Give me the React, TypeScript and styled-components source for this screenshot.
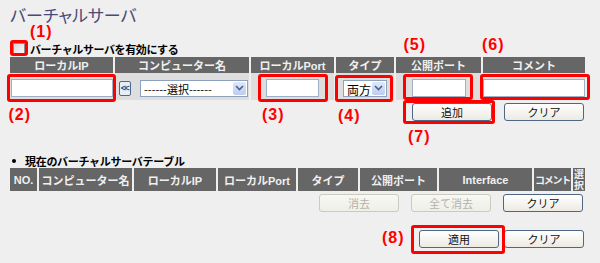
import React from "react";
import styled, { createGlobalStyle } from "styled-components";

const GlobalStyle = createGlobalStyle`
  body {
    margin: 0;
    background: #efefef;
    font-family: "Liberation Sans", "Noto Sans CJK JP", sans-serif;
  }
  #root {
    width: 600px;
    height: 263px;
    overflow: hidden;
  }
`;

const TOP_COLS = "103px 134px 83px 58px 85px 102px";
const LIST_COLS = "27px 93px 82px 78px 60px 77px 93px 37px 12px";

export default function App() {
  return (
    <>
      <GlobalStyle />
      <Page>
        <Title>バーチャルサーバ</Title>

        <CheckRow>
          <Callout n={1} ring={[-3, -3, -1, -3]} tag={[-19, 17]}>
            <CheckBox />
          </Callout>
          <CheckLabel>バーチャルサーバを有効にする</CheckLabel>
        </CheckRow>

        <Grid $cols={TOP_COLS}>
          <HeadCell $h={16}>ローカルIP</HeadCell>
          <HeadCell $h={16}>コンピューター名</HeadCell>
          <HeadCell $h={16}>ローカルPort</HeadCell>
          <HeadCell $h={16}>タイプ</HeadCell>
          <HeadCell $h={16}>公開ポート</HeadCell>
          <HeadCell $h={16}>コメント</HeadCell>

          <InputCell>
            <Callout n={2} ring={[-5, -3, -5, -4]} tag={[28, -2]}>
              <TextInput $w={102} />
            </Callout>
          </InputCell>
          <InputCell $start>
            <PickButton>&lt;&lt;</PickButton>
            <SelectBox $w={108}>
              <Select defaultValue="none">
                <option value="none">------選択------</option>
              </Select>
              <Arrow>
                <svg width="9" height="6" viewBox="0 0 9 6">
                  <path d="M1 1 L4.5 4.5 L8 1" fill="none" stroke="#4d6185" strokeWidth="1.6" />
                </svg>
              </Arrow>
            </SelectBox>
          </InputCell>
          <InputCell>
            <Callout n={3} ring={[-5, -9, -5, -8]} tag={[28, -4]}>
              <TextInput $w={53} />
            </Callout>
          </InputCell>
          <InputCell>
            <Callout n={4} ring={[-5, -6, -5, -8]} tag={[28, -5]}>
              <SelectBox $w={44}>
                <Select defaultValue="both" $big>
                  <option value="both">両方</option>
                </Select>
                <Arrow>
                  <svg width="9" height="6" viewBox="0 0 9 6">
                    <path d="M1 1 L4.5 4.5 L8 1" fill="none" stroke="#4d6185" strokeWidth="1.6" />
                  </svg>
                </Arrow>
              </SelectBox>
            </Callout>
          </InputCell>
          <InputCell>
            <Callout n={5} ring={[-5, -7, -3, -9]} tag={[-42, -8]}>
              <TextInput $w={54} />
            </Callout>
          </InputCell>
          <InputCell>
            <Callout n={6} ring={[-5, -5, -3, -3]} tag={[-42, -1]}>
              <TextInput $w={102} />
            </Callout>
          </InputCell>
        </Grid>

        <ButtonRow $right={1} $top={3}>
          <Callout n={7} ring={[-3, -3, -3, -9]} tag={[26, -4]}>
            <Button>追加</Button>
          </Callout>
          <Button>クリア</Button>
        </ButtonRow>

        <ListTitle>
          <Bullet />
          現在のバーチャルサーバテーブル
        </ListTitle>

        <Grid $cols={LIST_COLS}>
          <HeadCell $h={23}>NO.</HeadCell>
          <HeadCell $h={23}>コンピューター名</HeadCell>
          <HeadCell $h={23}>ローカルIP</HeadCell>
          <HeadCell $h={23}>ローカルPort</HeadCell>
          <HeadCell $h={23}>タイプ</HeadCell>
          <HeadCell $h={23}>公開ポート</HeadCell>
          <HeadCell $h={23}>Interface</HeadCell>
          <HeadCell $h={23} $tight>
            コメント
          </HeadCell>
          <NarrowHead $h={23}>
            選<br />択
          </NarrowHead>
        </Grid>

        <ButtonRow $right={2} $top={3}>
          <Button disabled>消去</Button>
          <Button disabled>全て消去</Button>
          <Button>クリア</Button>
        </ButtonRow>

        <ButtonRow $right={1} $top={18} $gap={5}>
          <Callout n={8} ring={[-5, -6, -6, -8]} tag={[0, -37]}>
            <Button>適用</Button>
          </Callout>
          <Button>クリア</Button>
        </ButtonRow>
      </Page>
    </>
  );
}

function Callout(props: {
  n: number;
  ring: [number, number, number, number];
  tag: [number, number];
  children: React.ReactNode;
}) {
  const [t, r, b, l] = props.ring;
  return (
    <Anchor>
      {props.children}
      <Ring $t={t} $r={r} $b={b} $l={l} />
      <Tag $t={props.tag[0]} $l={props.tag[1]}>
        ({props.n})
      </Tag>
    </Anchor>
  );
}

const Page = styled.div`
  padding: 5px 0 0 10px;
  width: 575px;
`;

const Title = styled.h1`
  margin: 0;
  height: 19px;
  font-family: "Noto Sans CJK JP", sans-serif;
  font-feature-settings: "palt";
  font-size: 17px;
  font-weight: 400;
  line-height: 19px;
  color: #4a4a78;
`;

const CheckRow = styled.div`
  display: flex;
  align-items: center;
  height: 16px;
  margin-top: 17px;
  padding-left: 3px;
  gap: 5px;
`;

const CheckBox = styled.span`
  display: block;
  width: 10px;
  height: 10px;
  border: 1px solid #8a8f96;
  background: linear-gradient(135deg, #d8d8d8, #fafafa);
`;

const CheckLabel = styled.span`
  font-family: "Noto Sans CJK JP", sans-serif;
  font-size: 11px;
  font-weight: 700;
  letter-spacing: -0.4px;
  color: #000;
`;

const Grid = styled.div<{ $cols: string }>`
  display: grid;
  grid-template-columns: ${(p) => p.$cols};
  column-gap: 2px;
`;

const HeadCell = styled.div<{ $h: number; $tight?: boolean }>`
  display: flex;
  align-items: center;
  justify-content: center;
  height: ${(p) => p.$h}px;
  background: #666666;
  color: #f0f0f0;
  font-size: ${(p) => (p.$tight ? "10px" : "11px")};
  font-weight: 700;
  letter-spacing: ${(p) => (p.$tight ? "-1.2px" : "0")};
  white-space: nowrap;
  overflow: hidden;
`;

const NarrowHead = styled(HeadCell)`
  flex-direction: column;
  font-size: 10px;
  line-height: 11px;
  overflow: visible;
`;

const InputCell = styled.div<{ $start?: boolean }>`
  display: flex;
  align-items: center;
  justify-content: ${(p) => (p.$start ? "flex-start" : "center")};
  gap: 9px;
  padding: 6px 0 3px ${(p) => (p.$start ? "4px" : "0")};
  background: #dedede;
`;

const TextInput = styled.input.attrs({ type: "text" })<{ $w: number }>`
  display: block;
  box-sizing: border-box;
  width: ${(p) => p.$w}px;
  height: 18px;
  margin: 0;
  padding: 0 2px;
  border: 1px solid #9fb0c6;
  background: #fff;
  outline: none;
`;

const PickButton = styled.button`
  box-sizing: border-box;
  width: 12px;
  height: 15px;
  padding: 0;
  border: 1px solid #4d6a8c;
  border-radius: 2px;
  background: #e8eef6;
  color: #2a4a80;
  font-family: "Liberation Sans", sans-serif;
  font-size: 9px;
  font-weight: 700;
  letter-spacing: -1.5px;
  line-height: 13px;
  text-indent: -1px;
`;

const SelectBox = styled.div<{ $w: number }>`
  display: flex;
  align-items: stretch;
  box-sizing: border-box;
  width: ${(p) => p.$w}px;
  height: 17px;
  border: 1px solid #8ea2bd;
  background: #fff;
`;

const Select = styled.select<{ $big?: boolean }>`
  flex: 1;
  min-width: 0;
  appearance: none;
  border: none;
  outline: none;
  margin: 0;
  padding: 0 0 0 3px;
  background: transparent;
  font-family: "Noto Sans CJK JP", sans-serif;
  font-size: ${(p) => (p.$big ? "12px" : "11px")};
  color: #000;
`;

const Arrow = styled.span`
  display: flex;
  align-items: center;
  justify-content: center;
  width: 13px;
  margin: 1px;
  border-radius: 2px;
  background: linear-gradient(#dfe8fb, #bccdf1);
`;

const ButtonRow = styled.div<{ $right: number; $top: number; $gap?: number }>`
  display: flex;
  justify-content: flex-end;
  gap: ${(p) => p.$gap ?? 12}px;
  margin-top: ${(p) => p.$top}px;
  padding-right: ${(p) => p.$right}px;
`;

const Button = styled.button`
  box-sizing: border-box;
  width: 80px;
  height: 18px;
  margin: 0;
  padding: 0;
  border: 1px solid #4f6784;
  border-radius: 3px;
  background: linear-gradient(#ffffff, #eceae2);
  color: #111;
  font-family: "Noto Sans CJK JP", sans-serif;
  font-size: 11px;
  line-height: 16px;

  &:disabled {
    border-color: #cbcbbd;
    color: #b3b3aa;
    background: linear-gradient(#f8f8f4, #efefe8);
  }
`;

const ListTitle = styled.div`
  display: flex;
  align-items: center;
  gap: 9px;
  height: 14px;
  margin-top: 33px;
  padding-left: 2px;
  font-family: "Noto Sans CJK JP", sans-serif;
  font-size: 11px;
  font-weight: 700;
  letter-spacing: -0.3px;
  color: #000;
`;

const Bullet = styled.span`
  width: 4px;
  height: 4px;
  border-radius: 50%;
  background: #000;
`;

const Anchor = styled.span`
  position: relative;
  display: inline-flex;
`;

const Ring = styled.span<{ $t: number; $r: number; $b: number; $l: number }>`
  position: absolute;
  top: ${(p) => p.$t}px;
  right: ${(p) => p.$r}px;
  bottom: ${(p) => p.$b}px;
  left: ${(p) => p.$l}px;
  border: 3px solid #ff0000;
  border-radius: 3px;
  pointer-events: none;
`;

const Tag = styled.span<{ $t: number; $l: number }>`
  position: absolute;
  top: ${(p) => p.$t}px;
  left: ${(p) => p.$l}px;
  font-family: "Liberation Sans", sans-serif;
  font-size: 16px;
  font-weight: 700;
  line-height: 16px;
  letter-spacing: 1px;
  color: #ff0000;
  white-space: nowrap;
`;
